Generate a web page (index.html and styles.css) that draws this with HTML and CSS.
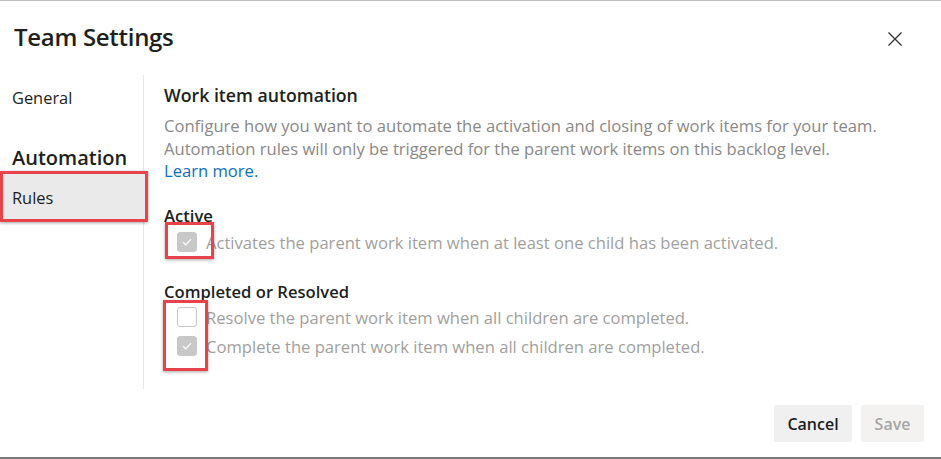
FILE: index.html
```html
<!DOCTYPE html>
<html>
<head>
<meta charset="utf-8">
<link rel="stylesheet" href="styles.css">
</head>
<body>
<div class="dialog">
  <div class="header">
    <h1 class="title">Team Settings</h1>
    <button class="close" aria-label="Close">
      <svg width="16" height="16" viewBox="0 0 16 16"><path d="M1.5 1.5 L14.5 14.5 M14.5 1.5 L1.5 14.5" stroke="#333" stroke-width="1.3" fill="none"/></svg>
    </button>
  </div>
  <div class="main">
    <nav class="nav">
      <div class="nav-item">General</div>
      <div class="nav-group">Automation</div>
      <div class="nav-item selected">Rules<span class="mark mark-rules"></span></div>
    </nav>
    <section class="content">
      <h2 class="heading">Work item automation</h2>
      <p class="desc">Configure how you want to automate the activation and closing of work items for your team.<br>Automation rules will only be triggered for the parent work items on this backlog level.<br><a class="link" href="#">Learn more.</a></p>
      <h3 class="sub">Active</h3>
      <div class="group g1">
        <span class="mark mark-active"></span>
        <label class="row"><span class="cb checked"><svg width="12" height="12" viewBox="0 0 12 12"><path d="M2 6.3 L4.8 9 L10 3.2" stroke="#fff" stroke-width="1.2" fill="none"/></svg></span><span class="lbl">Activates the parent work item when at least one child has been activated.</span></label>
      </div>
      <h3 class="sub sub2">Completed or Resolved</h3>
      <div class="group g2">
        <span class="mark mark-completed"></span>
        <label class="row"><span class="cb"></span><span class="lbl">Resolve the parent work item when all children are completed.</span></label>
        <label class="row"><span class="cb checked"><svg width="12" height="12" viewBox="0 0 12 12"><path d="M2 6.3 L4.8 9 L10 3.2" stroke="#fff" stroke-width="1.2" fill="none"/></svg></span><span class="lbl">Complete the parent work item when all children are completed.</span></label>
      </div>
    </section>
  </div>
  <div class="footer">
    <button class="btn">Cancel</button>
    <button class="btn disabled">Save</button>
  </div>
</div>
</body>
</html>
```
FILE: styles.css
```css
* { box-sizing: border-box; }
html, body { margin: 0; padding: 0; background: #fff; }
body {
  width: 941px;
  height: 459px;
  overflow: hidden;
  font-family: "Open Sans", "Noto Sans", sans-serif;
  color: #201f1e;
  border-top: 1px solid #bdbdbd;
  border-bottom: 2px solid #7a7a7a;
}
.dialog { display: flex; flex-direction: column; height: 456px; }
.header {
  display: flex;
  align-items: center;
  justify-content: space-between;
  padding: 0 38px 0 14px;
  height: 74px;
}
.title { margin: 0; font-size: 24px; font-weight: 600; letter-spacing: -0.3px; line-height: 32px; position: relative; top: -1px; }
.close { border: 0; background: none; padding: 0; width: 16px; height: 16px; display: flex; position: relative; top: 1px; }
.main { display: flex; height: 314px; }
.nav { width: 144px; border-right: 1px solid #e6e6e6; flex: none; }
.nav-item { font-size: 16.4px; padding: 0 12px; height: 44px; display: flex; align-items: center; position: relative; }
.nav-group { font-size: 20px; font-weight: 600; padding: 0 12px; margin-top: 23px; height: 30px; display: flex; align-items: center; }
.nav-item.selected { background: #eaeaea; width: 147px; margin-top: 1px; height: 48px; }
.mark { position: absolute; border: 3px solid #e8434b; box-shadow: 0 1px 3px rgba(0,0,0,0.35); pointer-events: none; }
.mark-rules { left: 0; top: -2px; width: 148px; height: 51px; }
.content { padding: 7px 0 0 20px; flex: 1; }
.heading { margin: 0; font-size: 17.7px; font-weight: 600; line-height: 26px; }
.desc { margin: 7px 0 0; font-size: 16.6px; line-height: 22.5px; color: #8a8886; }
.link { color: #106ebe; text-decoration: none; }
.sub { margin: 23.5px 0 0; font-size: 16.6px; font-weight: 600; line-height: 20px; }
.sub2 { margin-top: 25.5px; }
.group { position: relative; padding-left: 13px; }
.g1 { margin-top: 1.5px; }
.g2 { margin-top: 0.5px; }
.row { display: flex; align-items: center; height: 29px; }
.cb {
  width: 20px; height: 20px; border-radius: 3px; border: 1px solid #c8c6c4;
  margin-right: 9px; display: flex; align-items: center; justify-content: center; background: #fff; flex: none;
}
.cb.checked { background: #c8c8c8; border-color: #c8c8c8; }
.lbl { font-size: 16.6px; color: #a19f9d; }
.mark-active { left: 1px; top: -6px; width: 49px; height: 37px; }
.mark-completed { left: -1px; top: -2.5px; width: 45px; height: 71px; }
.footer { display: flex; justify-content: flex-end; gap: 9px; padding: 16px 17px 0 0; }
.btn {
  font-family: inherit; font-size: 16px; border: 0; border-radius: 2px;
  background: #f0f0f0; color: #201f1e; height: 37px; padding: 0; font-weight: 600;
}
.btn:first-child { width: 78px; }
.btn.disabled { color: #a6a6a6; background: #f3f2f1; width: 63px; }
```
